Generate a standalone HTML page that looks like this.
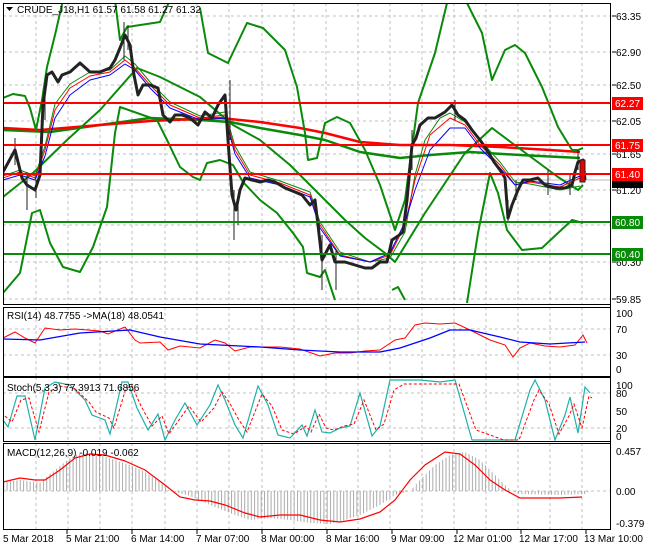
<!DOCTYPE html>
<html><head><meta charset="utf-8"><style>
html,body{margin:0;padding:0;background:#fff;width:650px;height:550px;overflow:hidden}
svg{display:block;font-family:"Liberation Sans",sans-serif;font-size:10px}
</style></head><body>
<svg width="650" height="550" viewBox="0 0 650 550" xmlns="http://www.w3.org/2000/svg">
<defs>
<pattern id="hb" width="3.3" height="10" patternUnits="userSpaceOnUse"><rect x="0" y="0" width="1" height="10" fill="#aaa"/></pattern>
<clipPath id="cm"><rect x="3" y="3" width="607" height="301"/></clipPath>
</defs>
<rect width="650" height="550" fill="#fff"/>
<!-- grids -->
<g stroke="#c0c0c0" stroke-dasharray="3,3" stroke-width="1">
<path d="M36 3V304M68 3V304M100 3V304M132 3V304M165 3V304M197 3V304M229 3V304M262 3V304M294 3V304M326 3V304M358 3V304M390 3V304M422 3V304M454 3V304M486 3V304M518 3V304M550 3V304M582 3V304"/>
<path d="M3 16H610M3 52H610M3 85H610M3 121H610M3 154H610M3 190H610M3 225H610M3 262H610M3 299H610"/>
<path d="M36 307V376M68 307V376M100 307V376M132 307V376M165 307V376M197 307V376M229 307V376M262 307V376M294 307V376M326 307V376M358 307V376M390 307V376M422 307V376M454 307V376M486 307V376M518 307V376M550 307V376M582 307V376"/>
<path d="M3 329H610M3 355H610"/>
<path d="M36 377V441M68 377V441M100 377V441M132 377V441M165 377V441M197 377V441M229 377V441M262 377V441M294 377V441M326 377V441M358 377V441M390 377V441M422 377V441M454 377V441M486 377V441M518 377V441M550 377V441M582 377V441"/>
<path d="M3 393H610M3 428H610"/>
<path d="M36 443V529M68 443V529M100 443V529M132 443V529M165 443V529M197 443V529M229 443V529M262 443V529M294 443V529M326 443V529M358 443V529M390 443V529M422 443V529M454 443V529M486 443V529M518 443V529M550 443V529M582 443V529"/>
<path d="M3 491H610"/>
</g>
<g clip-path="url(#cm)" fill="none" stroke-linejoin="round">
<line x1="3" y1="180" x2="610" y2="180" stroke="#bbb"/>
<!-- long MAs -->
<polyline stroke="#0a8a0a" stroke-width="2.5" points="3,130 50,132 100,125 150,118 200,120 230,122 260,128 300,135 325,140 360,152 400,158 430,155 470,152 520,155 580,158"/>
<polyline stroke="#f00" stroke-width="2.5" points="3,128 40,130 100,125 150,121 220,118 260,122 300,128 325,133 360,142 400,145 450,145 500,147 550,150 580,152"/>
<!-- bands -->
<g stroke="#0a8a0a" stroke-width="2">
<polyline points="3,98 13,94 25,96 30,108 36,130 42,100 47,67 55,35 63,0"/>
<polyline points="115,0 120,40 127,27 160,22 170,0"/>
<polyline points="200,8 208,53 228,63 247,23 263,28 285,50 297,87 305,133 308,160 317,158 325,123 337,117 350,123 365,150 380,185 390,215 395,230 405,200 418,103 435,53 447,3"/>
<polyline points="467,3 482,33 492,80 505,50 515,45 525,53 542,87 558,127 572,150 578,150 583,148"/>
<polyline points="3,293 20,273 32,213 40,210 50,243 63,267 80,272 93,247 107,207 115,133 120,107 157,120 167,140 180,167 193,177 200,180 207,163 220,160 233,165 243,182 260,200 277,213 293,233 303,247 307,273 320,277 325,270 335,300"/>
<polyline points="392,290 398,287 405,300"/>
<polyline points="467,303 478,233 490,173 498,193 507,230 522,250 542,248 558,233 572,220 583,223"/>
<polyline points="3,197 33,173 67,140 100,110 137,68 160,77 200,97 233,125 260,140 290,165 315,190 325,200 345,220 365,238 385,253 395,262 425,213 465,153 492,128 512,143 558,177 578,190 583,185"/>
</g>
<!-- short MAs -->
<polyline stroke="#0a8a0a" stroke-width="1" points="3,176 20,170 35,176 45,146 55,104 70,84 90,72 110,70 125,56 135,64 150,82 170,102 200,116 225,112 235,146 250,172 280,181 310,192 320,222 340,252 370,262 390,258 405,232 415,175 425,140 440,118 450,113 465,122 480,140 500,162 515,182 530,184 560,190 580,186"/>
<polyline stroke="#f00" stroke-width="1" points="3,178 20,172 35,178 45,150 55,110 70,88 90,76 110,72 125,60 135,68 150,85 170,105 200,118 225,115 235,150 250,175 280,183 310,195 320,225 340,255 370,262 390,255 405,225 415,180 430,135 450,118 465,125 480,145 500,165 515,185 530,182 560,187 580,178"/>
<polyline stroke="#00f" stroke-width="1" points="3,180 20,175 35,180 45,156 55,118 70,95 90,80 110,75 125,64 135,70 150,88 170,108 200,120 225,118 235,154 250,178 280,185 310,197 320,228 340,256 370,262 390,253 405,222 415,190 430,150 450,128 465,128 480,148 500,168 515,185 530,181 560,185 580,176"/>
<!-- price -->
<polyline stroke="#222" stroke-width="3" points="3,172 15,150 22,178 27,185 35,190 40,175 43,105 47,75 52,72 58,82 62,75 70,72 80,63 90,72 100,72 105,70 110,68 115,60 120,48 125,35 130,45 134,75 138,95 143,85 150,85 158,88 163,115 170,122 175,115 182,115 190,118 198,125 205,112 212,118 218,105 225,95 228,140 232,195 236,210 240,190 245,178 252,180 260,182 268,180 275,182 285,188 295,192 302,195 310,205 315,200 318,225 322,260 330,245 335,262 345,262 355,265 365,268 372,268 380,262 387,262 392,240 398,236 403,232 407,200 412,145 416,138 420,125 428,118 435,118 445,112 452,105 458,115 465,120 472,130 480,140 487,150 494,162 500,170 505,178 508,218 512,205 518,190 523,180 530,180 538,178 545,185 555,188 565,188 572,185 575,172 578,162 583,160 585,180"/>
<g stroke="#222" stroke-width="1">
<path d="M15 138V165M27 172V210M36 180V198M45 95V120M124 22V60M128 25V50M230 80V140M234 190V240M238 195V225M322 235V290M336 250V290M412 130V170M455 100V120M508 200V222M516 180V200M548 170V195M570 175V195M578 150V170"/>
</g>
<rect x="580" y="160" width="5" height="22" fill="#e00" stroke="#222" stroke-width="1"/>
</g>
<!-- horizontal levels -->
<g stroke-width="2">
<line x1="3" y1="103" x2="610" y2="103" stroke="#f00"/>
<line x1="3" y1="145" x2="610" y2="145" stroke="#f00"/>
<line x1="3" y1="174" x2="610" y2="174" stroke="#f00"/>
<line x1="3" y1="222" x2="610" y2="222" stroke="#0a8a0a"/>
<line x1="3" y1="254" x2="610" y2="254" stroke="#0a8a0a"/>
</g>
<!-- RSI -->
<polyline fill="none" stroke="#f00" stroke-width="1" points="3,338 15,332 25,338 35,343 45,328 60,330 75,329 100,331 108,334 125,327 135,340 140,343 160,342 168,350 180,346 200,348 215,340 225,343 235,351 250,347 280,347 300,349 320,356 335,353 350,353 365,351 380,350 395,340 405,338 415,325 425,323 440,324 455,323 470,330 490,340 505,345 513,357 520,348 530,343 545,346 560,347 575,345 583,335 587,343"/>
<polyline fill="none" stroke="#00f" stroke-width="1.3" points="3,339 40,340 80,333 130,330 160,337 200,344 260,347 300,350 340,352 380,352 400,348 430,338 450,330 470,330 500,337 520,342 550,344 585,342"/>
<!-- Stoch -->
<polyline fill="none" stroke="#20b0a8" stroke-width="1.2" points="3,420 8,427 17,396 25,396 35,440 45,388 55,382 70,385 85,400 92,415 105,420 110,434 122,382 128,382 137,408 148,430 158,414 165,440 175,420 185,403 197,425 210,405 218,385 225,400 235,425 243,438 258,386 268,405 278,435 290,438 302,425 307,436 315,410 322,432 330,433 340,428 350,426 360,393 372,436 380,426 390,380 400,380 420,380 440,382 455,380 472,440 500,440 515,440 530,390 535,380 545,400 555,440 565,415 570,397 578,433 585,387 590,393"/>
<polyline fill="none" stroke="#f00" stroke-width="1" stroke-dasharray="3,2" points="5,416 12,422 21,400 29,398 39,432 49,392 59,386 74,388 89,402 96,412 109,418 114,428 126,388 132,386 141,406 152,426 162,416 169,434 179,420 189,406 201,422 214,408 222,392 229,402 239,420 247,432 262,394 272,406 282,430 294,434 306,426 311,432 319,414 326,428 334,430 344,426 354,424 364,400 376,430 384,424 394,390 404,384 424,384 444,384 459,384 476,430 504,440 519,440 534,400 539,390 549,404 559,434 569,416 574,404 582,428 589,396 592,398"/>
<!-- MACD -->
<polygon fill="url(#hb)" points="3,491 3,482 20,480 40,483 45,478 55,470 65,462 75,455 85,453 100,455 115,460 130,465 145,472 160,482 170,491 175,492 190,496 210,505 235,515 250,520 270,518 290,520 310,523 330,524 345,520 360,515 380,505 395,495 410,491 420,480 435,465 450,455 465,452 480,460 495,475 505,485 512,491 520,494 560,495 585,494 590,491"/>
<polyline fill="none" stroke="#f00" stroke-width="1.2" points="3,482 20,478 35,480 45,480 60,470 75,458 90,454 105,455 125,461 145,470 165,485 180,497 195,500 210,501 225,505 245,513 260,517 280,515 300,515 320,520 340,522 360,519 380,512 395,500 410,480 425,465 445,452 460,454 475,465 490,480 505,490 520,498 540,498 560,498 582,497"/>
<!-- panel borders -->
<g fill="none" stroke="#000" stroke-width="1">
<rect x="3.5" y="3.5" width="607" height="301"/>
<rect x="3.5" y="307.5" width="607" height="69"/>
<rect x="3.5" y="377.5" width="607" height="64"/>
<rect x="3.5" y="443.5" width="607" height="86"/>
<path d="M610.5 3V530"/>
<path d="M612 16h4M612 52h4M612 85h4M612 121h4M612 154h4M612 190h4M612 225h4M612 262h4M612 299h4"/>
<path d="M67 530v4M132 530v4M197 530v4M262 530v4M327 530v4M392 530v4M457 530v4M521 530v4M586 530v4"/>
</g>
<!-- titles -->
<path d="M6 7h7l-3.5 4z" fill="#000"/>
<text x="17" y="13" fill="#000">CRUDE_J18,H1  61.57 61.58 61.27 61.32</text>
<text x="7" y="319" fill="#000">RSI(14) 48.7755  -&gt;MA(18) 48.0541</text>
<text x="7" y="391" fill="#000">Stoch(5,3,3) 77.3913 71.6856</text>
<text x="7" y="456" fill="#000">MACD(12,26,9) -0.019 -0.062</text>
<!-- axis labels -->
<g fill="#000">
<text x="616" y="20">63.35</text><text x="616" y="56">62.90</text><text x="616" y="89">62.50</text>
<text x="616" y="125">62.05</text><text x="616" y="158">61.65</text><text x="616" y="194">61.20</text>
<text x="616" y="229">60.75</text><text x="616" y="266">60.30</text><text x="616" y="303">59.85</text>
<text x="616" y="317">100</text><text x="616" y="333">70</text><text x="616" y="359">30</text><text x="616" y="373">0</text>
<text x="616" y="389">100</text><text x="616" y="397">80</text><text x="616" y="415">50</text><text x="616" y="432">20</text><text x="616" y="440">0</text>
<text x="616" y="455">0.457</text><text x="616" y="495">0.00</text><text x="616" y="527">-0.379</text>
</g>
<rect x="612" y="97" width="31" height="13" fill="#f00"/><text x="615" y="107" fill="#fff">62.27</text>
<rect x="612" y="139" width="31" height="13" fill="#f00"/><text x="615" y="149" fill="#fff">61.75</text>
<rect x="612" y="168" width="31" height="13" fill="#f00"/><text x="615" y="178" fill="#fff">61.40</text>
<rect x="612" y="181" width="31" height="7" fill="#000"/>
<rect x="612" y="216" width="31" height="13" fill="#0a8a0a"/><text x="615" y="226" fill="#fff">60.80</text>
<rect x="612" y="248" width="31" height="13" fill="#0a8a0a"/><text x="615" y="258" fill="#fff">60.40</text>
<g fill="#000">
<text x="3" y="542">5 Mar 2018</text><text x="66" y="542">5 Mar 21:00</text><text x="131" y="542">6 Mar 14:00</text>
<text x="196" y="542">7 Mar 07:00</text><text x="261" y="542">8 Mar 00:00</text><text x="326" y="542">8 Mar 16:00</text>
<text x="391" y="542">9 Mar 09:00</text><text x="453" y="542">12 Mar 01:00</text><text x="519" y="542">12 Mar 17:00</text>
<text x="584" y="542">13 Mar 10:00</text>
</g>
</svg>
</body></html>
